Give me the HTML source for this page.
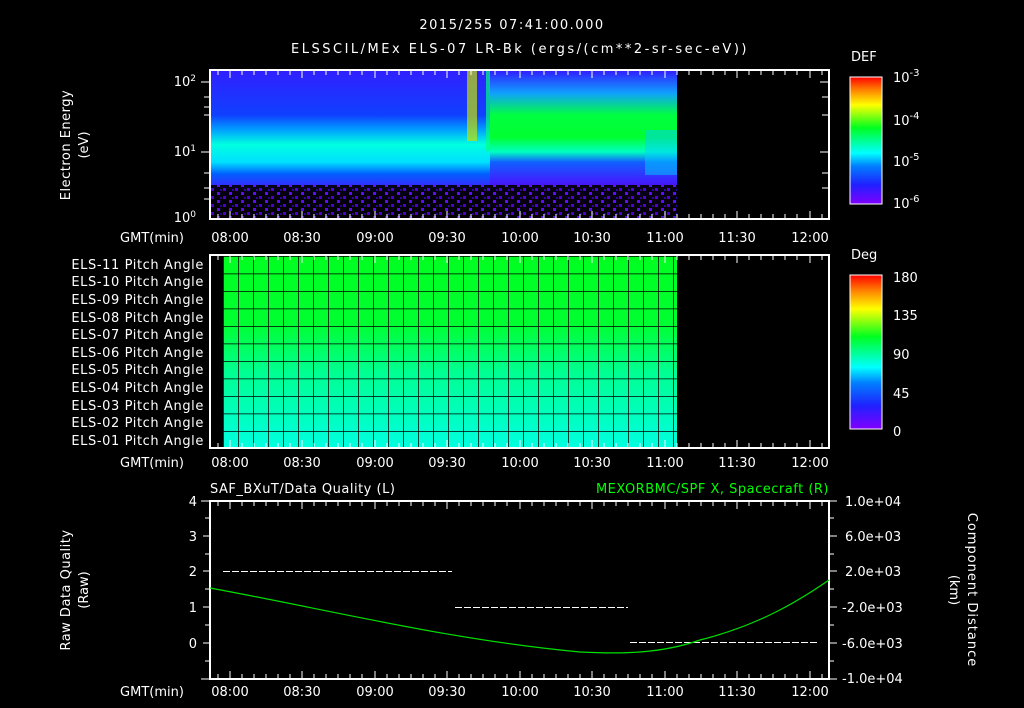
<!DOCTYPE html>
<html><head><meta charset="utf-8"><style>
body{margin:0;background:#000;width:1024px;height:708px;overflow:hidden}
svg{display:block}
text{font-family:"DejaVu Sans","Liberation Sans",sans-serif;fill:#fff;font-size:13px}
</style></head><body>
<svg width="1024" height="708" viewBox="0 0 1024 708" xmlns="http://www.w3.org/2000/svg" xml:space="preserve">
<defs>
<linearGradient id="rb" x1="0" y1="1" x2="0" y2="0">
<stop offset="0" stop-color="#8000ff"/><stop offset="0.15" stop-color="#2020ff"/><stop offset="0.3" stop-color="#0080ff"/><stop offset="0.4" stop-color="#00ffff"/><stop offset="0.6" stop-color="#00ff20"/><stop offset="0.78" stop-color="#ffff00"/><stop offset="0.9" stop-color="#ff8000"/><stop offset="1" stop-color="#ff0000"/>
</linearGradient>
<linearGradient id="spL" x1="0" y1="0" x2="0" y2="1">
<stop offset="0" stop-color="#3020ff"/><stop offset="0.3" stop-color="#1040ff"/><stop offset="0.4" stop-color="#00a0ff"/><stop offset="0.5" stop-color="#00ffe0"/><stop offset="0.62" stop-color="#00e0ff"/><stop offset="0.7" stop-color="#0060ff"/><stop offset="0.8" stop-color="#4020ff"/><stop offset="0.85" stop-color="#300080"/><stop offset="1" stop-color="#100020"/>
</linearGradient>
<linearGradient id="spR" x1="0" y1="0" x2="0" y2="1">
<stop offset="0" stop-color="#3020ff"/><stop offset="0.15" stop-color="#10a0ff"/><stop offset="0.3" stop-color="#00ff40"/><stop offset="0.45" stop-color="#00ff30"/><stop offset="0.55" stop-color="#00ffc0"/><stop offset="0.62" stop-color="#1060ff"/><stop offset="0.75" stop-color="#4020ff"/><stop offset="0.85" stop-color="#5000c0"/><stop offset="1" stop-color="#200040"/>
</linearGradient>
<linearGradient id="pa" x1="0" y1="0" x2="0" y2="1">
<stop offset="0" stop-color="#00ff20"/><stop offset="0.35" stop-color="#00ff30"/><stop offset="0.6" stop-color="#00ff90"/><stop offset="1" stop-color="#00ffe0"/>
</linearGradient>
<pattern id="grid" x="223" y="256" width="15" height="17.5" patternUnits="userSpaceOnUse">
<path d="M0 0V17.5M0 0H15" fill="none" stroke="#000" stroke-width="1.5"/>
</pattern>
<pattern id="noise" width="12" height="8" patternUnits="userSpaceOnUse">
<rect width="12" height="8" fill="#000"/><rect x="1" y="0" width="3" height="3" fill="#6010ff"/><rect x="7" y="4" width="3" height="3" fill="#5000e0"/><rect x="4" y="5" width="2" height="2" fill="#3000a0"/>
</pattern>
<g id="tk" stroke="#fff" stroke-width="1">
<path d="M230 0v7M302 0v7M375 0v7M447 0v7M520 0v7M592 0v7M665 0v7M737 0v7M810 0v7M218 0v4M242 0v4M254 0v4M266 0v4M278 0v4M290 0v4M314 0v4M326 0v4M338 0v4M350 0v4M362 0v4M387 0v4M399 0v4M411 0v4M423 0v4M435 0v4M459 0v4M471 0v4M483 0v4M495 0v4M507 0v4M532 0v4M544 0v4M556 0v4M568 0v4M580 0v4M604 0v4M616 0v4M628 0v4M640 0v4M652 0v4M677 0v4M689 0v4M701 0v4M713 0v4M725 0v4M749 0v4M761 0v4M773 0v4M785 0v4M797 0v4M822 0v4"/>
</g>
</defs>
<text x="512" y="29" text-anchor="middle" font-size="17" letter-spacing="1.5">2015/255 07:41:00.000</text>
<text x="520" y="53" text-anchor="middle" font-size="18" letter-spacing="2.5">ELSSCIL/MEx ELS-07 LR-Bk  (ergs/(cm**2-sr-sec-eV))</text>

<!-- Panel 1 -->
<rect x="210" y="71" width="280" height="147" fill="url(#spL)"/>
<rect x="490" y="71" width="187" height="147" fill="url(#spR)"/>
<rect x="210" y="185" width="467" height="33" fill="url(#noise)" opacity="0.9"/>
<rect x="467" y="71" width="10" height="70" fill="#c0e000" opacity="0.7"/>
<rect x="486" y="71" width="4" height="80" fill="#00ff80" opacity="0.7"/>
<rect x="645" y="130" width="32" height="45" fill="#00d0ff" opacity="0.5"/>
<use href="#tk" y="71"/><use href="#tk" transform="translate(0,218) scale(1,-1)"/>
<rect x="210" y="70" width="619" height="149" fill="none" stroke="#fff" stroke-width="2"/>
<g stroke="#fff" stroke-width="1">
<path d="M201 82h9M204 97h6M204 107h6M204 115h6M201 152h9M204 173h6M204 188h6M204 199h6M820 82h9M822 97h7M822 115h7M820 152h9M822 173h7M822 188h7"/>
</g>
<text x="196" y="86" text-anchor="end">10<tspan font-size="9" dy="-5">2</tspan></text>
<text x="196" y="156" text-anchor="end">10<tspan font-size="9" dy="-5">1</tspan></text>
<text x="196" y="222" text-anchor="end">10<tspan font-size="9" dy="-5">0</tspan></text>
<text transform="translate(70,145) rotate(-90)" text-anchor="middle" font-size="14" letter-spacing="0.5">Electron Energy</text>
<text transform="translate(88,145) rotate(-90)" text-anchor="middle" font-size="14">(eV)</text>
<g font-size="13">
<text x="152" y="242" text-anchor="middle">GMT(min)</text>
<text x="230" y="242" text-anchor="middle">08:00</text><text x="302" y="242" text-anchor="middle">08:30</text><text x="375" y="242" text-anchor="middle">09:00</text><text x="447" y="242" text-anchor="middle">09:30</text><text x="520" y="242" text-anchor="middle">10:00</text><text x="592" y="242" text-anchor="middle">10:30</text><text x="665" y="242" text-anchor="middle">11:00</text><text x="737" y="242" text-anchor="middle">11:30</text><text x="810" y="242" text-anchor="middle">12:00</text>
</g>
<text x="851" y="61" font-size="15">DEF</text>
<rect x="850" y="77" width="32" height="127" fill="url(#rb)" stroke="#fff"/>
<text x="893" y="82" font-size="15">10<tspan font-size="10" dy="-6">-3</tspan></text>
<text x="893" y="125" font-size="15">10<tspan font-size="10" dy="-6">-4</tspan></text>
<text x="893" y="166" font-size="15">10<tspan font-size="10" dy="-6">-5</tspan></text>
<text x="893" y="208" font-size="15">10<tspan font-size="10" dy="-6">-6</tspan></text>

<!-- Panel 2 -->
<rect x="223" y="256" width="454" height="192" fill="url(#pa)"/>
<rect x="223" y="256" width="454" height="192" fill="url(#grid)"/>
<use href="#tk" y="256"/><use href="#tk" transform="translate(0,447) scale(1,-1)"/>
<rect x="210" y="255" width="619" height="193" fill="none" stroke="#fff" stroke-width="2"/>
<g font-size="12" text-anchor="end" letter-spacing="0.6">
<text x="204" y="269">ELS-11 Pitch Angle</text><text x="204" y="286">ELS-10 Pitch Angle</text><text x="204" y="304">ELS-09 Pitch Angle</text><text x="204" y="322">ELS-08 Pitch Angle</text><text x="204" y="339">ELS-07 Pitch Angle</text><text x="204" y="357">ELS-06 Pitch Angle</text><text x="204" y="374">ELS-05 Pitch Angle</text><text x="204" y="392">ELS-04 Pitch Angle</text><text x="204" y="410">ELS-03 Pitch Angle</text><text x="204" y="427">ELS-02 Pitch Angle</text><text x="204" y="445">ELS-01 Pitch Angle</text>
</g>
<text x="152" y="467" text-anchor="middle">GMT(min)</text>
<text x="230" y="467" text-anchor="middle">08:00</text><text x="302" y="467" text-anchor="middle">08:30</text><text x="375" y="467" text-anchor="middle">09:00</text><text x="447" y="467" text-anchor="middle">09:30</text><text x="520" y="467" text-anchor="middle">10:00</text><text x="592" y="467" text-anchor="middle">10:30</text><text x="665" y="467" text-anchor="middle">11:00</text><text x="737" y="467" text-anchor="middle">11:30</text><text x="810" y="467" text-anchor="middle">12:00</text>
<text x="851" y="259" font-size="15">Deg</text>
<rect x="850" y="275" width="32" height="154" fill="url(#rb)" stroke="#fff"/>
<g font-size="16"><text x="893" y="282">180</text><text x="893" y="320">135</text><text x="893" y="359">90</text><text x="893" y="398">45</text><text x="893" y="436">0</text></g>

<!-- Panel 3 -->
<text x="210" y="493" font-size="15" letter-spacing="0.5">SAF_BXuT/Data Quality (L)</text>
<text x="829" y="493" font-size="15" text-anchor="end" letter-spacing="0.5" style="fill:#00ff00">MEXORBMC/SPF X, Spacecraft (R)</text>
<use href="#tk" y="502"/><use href="#tk" transform="translate(0,678) scale(1,-1)"/>
<rect x="210" y="501" width="619" height="178" fill="none" stroke="#fff" stroke-width="2"/>
<g stroke="#fff"><path d="M201 501h9M203 536h7M203 571h7M203 607h7M203 643h7M201 679h9M829 501h8M829 536h8M829 571h8M829 607h8M829 643h8M829 679h8M205 518h5M205 554h5M205 589h5M205 625h5M205 661h5M829 518h5M829 554h5M829 589h5M829 625h5M829 661h5"/></g>
<g text-anchor="end" font-size="13"><text x="197" y="506">4</text><text x="197" y="541">3</text><text x="197" y="576">2</text><text x="197" y="612">1</text><text x="197" y="648">0</text></g>
<g font-size="12"><text x="845" y="506">1.0e+04</text><text x="845" y="541">6.0e+03</text><text x="845" y="576">2.0e+03</text><text x="842" y="612">-2.0e+03</text><text x="842" y="648">-6.0e+03</text><text x="842" y="683">-1.0e+04</text></g>
<text transform="translate(70,590) rotate(-90)" text-anchor="middle" font-size="14" letter-spacing="0.5">Raw Data Quality</text>
<text transform="translate(88,590) rotate(-90)" text-anchor="middle" font-size="14">(Raw)</text>
<text transform="translate(968,590) rotate(90)" text-anchor="middle" font-size="14" letter-spacing="1">Component Distance</text>
<text transform="translate(950,590) rotate(90)" text-anchor="middle" font-size="14">(km)</text>
<g stroke="#fff" stroke-dasharray="7,2"><path d="M223 571.5H452M455 607.5H628M630 642.5H818"/></g>
<path d="M210 588 C330 610 450 640 580 652 C620 654 660 654 700 640 C760 625 800 600 829 580" fill="none" stroke="#00e000" stroke-width="1.2"/>
<text x="152" y="696" text-anchor="middle">GMT(min)</text>
<text x="230" y="696" text-anchor="middle">08:00</text><text x="302" y="696" text-anchor="middle">08:30</text><text x="375" y="696" text-anchor="middle">09:00</text><text x="447" y="696" text-anchor="middle">09:30</text><text x="520" y="696" text-anchor="middle">10:00</text><text x="592" y="696" text-anchor="middle">10:30</text><text x="665" y="696" text-anchor="middle">11:00</text><text x="737" y="696" text-anchor="middle">11:30</text><text x="810" y="696" text-anchor="middle">12:00</text>
</svg>
</body></html>
